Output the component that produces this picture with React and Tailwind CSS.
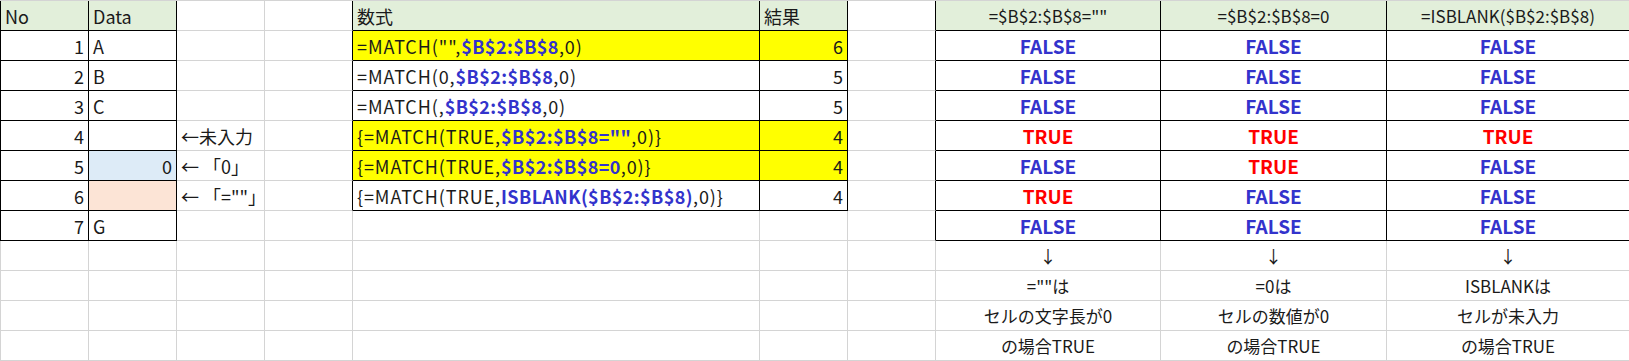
import React from "react";

const N = 12;
const NC = 10;

function blackRight(r, c) {
  if ((c === 0 || c === 1) && r <= 7) return true;
  if (c === 3 && r <= 6) return true;
  if ((c === 4 || c === 5) && r <= 6) return true;
  if (c === 6 && r <= 7) return true;
  if (c >= 7 && r <= 7) return true;
  return false;
}
function blackBottom(r, c) {
  if ((c === 0 || c === 1) && r <= 7) return true;
  if ((c === 4 || c === 5) && r <= 6) return true;
  if (c >= 7 && r <= 7) return true;
  return false;
}

const B = ({ children }) => (
  <span className="font-bold text-[#3333cc] tracking-[0.4px]">{children}</span>
);

const formulas = [
  <>=MATCH("",<B>$B$2:$B$8</B>,0)</>,
  <>=MATCH(0,<B>$B$2:$B$8</B>,0)</>,
  <>=MATCH(,<B>$B$2:$B$8</B>,0)</>,
  <>{"{"}=MATCH(TRUE,<B>$B$2:$B$8=""</B>,0){"}"}</>,
  <>{"{"}=MATCH(TRUE,<B>$B$2:$B$8=0</B>,0){"}"}</>,
  <>{"{"}=MATCH(TRUE,<B>ISBLANK($B$2:$B$8)</B>,0){"}"}</>,
];
const results = ["6", "5", "5", "4", "4", "4"];
const yellowRows = [1, 4, 5];
const dataB = ["A", "B", "C", "", "0", "", "G"];
const bools = [
  [0, 0, 0],
  [0, 0, 0],
  [0, 0, 0],
  [1, 1, 1],
  [0, 1, 0],
  [1, 0, 0],
  [0, 0, 0],
];
const notes = [
  ["↓", "↓", "↓"],
  ['=""は', "=0は", "ISBLANKは"],
  ["セルの文字長が0", "セルの数値が0", "セルが未入力"],
  ["の場合TRUE", "の場合TRUE", "の場合TRUE"],
];
const heads = ['=$B$2:$B$8=""', "=$B$2:$B$8=0", "=ISBLANK($B$2:$B$8)"];

function cellContent(r, c) {
  if (r === 0) {
    if (c === 0) return { content: "No", bg: "bg-[#e2efda]" };
    if (c === 1) return { content: "Data", bg: "bg-[#e2efda]" };
    if (c === 4) return { content: "数式", bg: "bg-[#e2efda]" };
    if (c === 5) return { content: "結果", bg: "bg-[#e2efda]" };
    if (c >= 7)
      return { content: heads[c - 7], bg: "bg-[#e2efda]", align: "center", right: true };
    return {};
  }
  if (r <= 7) {
    if (c === 0) return { content: String(r), align: "right" };
    if (c === 1) {
      if (r === 5) return { content: "0", align: "right", bg: "bg-[#ddebf7]" };
      if (r === 6) return { content: "", bg: "bg-[#fce4d6]" };
      return { content: dataB[r - 1] };
    }
    if (c === 2) {
      if (r === 4) return { content: "←未入力" };
      if (r === 5) return { content: "← 「0」" };
      if (r === 6) return { content: '← 「=""」' };
      return {};
    }
    if ((c === 4 || c === 5) && r <= 6) {
      const bg = yellowRows.includes(r) ? "bg-[#ffff00]" : "";
      if (c === 4) return { content: formulas[r - 1], bg, formula: true };
      return { content: results[r - 1], bg, align: "right" };
    }
    if (c >= 7) {
      const t = bools[r - 1][c - 7];
      return {
        content: (
          <span
            className={
              "font-bold text-[19px] " + (t ? "text-[#ff0000]" : "text-[#3333cc]")
            }
          >
            {t ? "TRUE" : "FALSE"}
          </span>
        ),
        align: "center",
        right: true,
      };
    }
    return {};
  }
  if (c >= 7) return { content: notes[r - 8][c - 7], align: "center", right: true };
  return {};
}

export default function App() {
  const cells = [];
  for (let r = 0; r < N; r++) {
    for (let c = 0; c < NC; c++) {
      const info = cellContent(r, c);
      const rb = blackRight(r, c) ? "border-r-black" : "border-r-[#d4d4d4]";
      const bb = blackBottom(r, c) ? "border-b-black" : "border-b-[#d4d4d4]";
      const lb =
        c === 0 ? (r <= 7 ? "border-l border-l-black" : "border-l border-l-[#d4d4d4]") : "";
      const just =
        info.align === "right"
          ? "justify-end"
          : info.align === "center"
          ? "justify-center"
          : "justify-start";
      const font = info.right
        ? "text-[17px]"
        : info.formula
        ? "text-[18px] tracking-[0.9px]"
        : "text-[18px]";
      cells.push(
        <div
          key={r + "-" + c}
          className={`h-[30px] border-r border-b ${rb} ${bb} ${lb} ${info.bg || "bg-white"} flex items-center ${just} px-[4px] overflow-hidden whitespace-nowrap ${font}`}
        >
          {info.content}
        </div>
      );
    }
  }
  return (
    <div className="w-[1629px] h-[361px] overflow-hidden bg-white font-['Noto_Sans_CJK_JP',sans-serif] text-[#1a1a1a] leading-none">
      <div className="grid grid-cols-[89px_88px_88px_88px_407px_88px_88px_225px_226px_243px] border-t border-t-[#d4d4d4] w-max">
        {cells}
      </div>
    </div>
  );
}
